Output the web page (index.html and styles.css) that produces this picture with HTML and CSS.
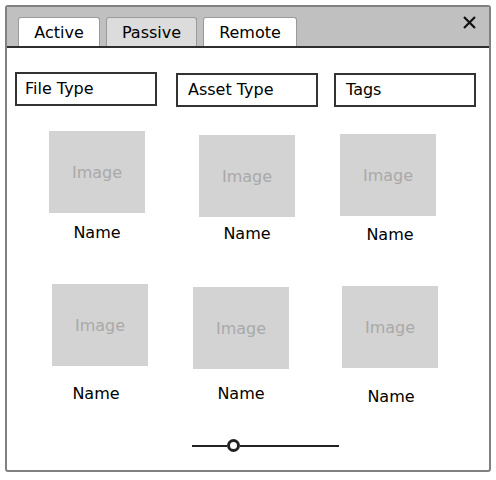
FILE: index.html
```html
<!DOCTYPE html>
<html lang="en">
<head>
<meta charset="utf-8">
<title>Asset Browser</title>
<link rel="stylesheet" href="styles.css">
</head>
<body>
<div class="window">
  <div class="header">
    <div class="tabs">
      <div class="tab tab-active">Active</div>
      <div class="tab tab-passive">Passive</div>
      <div class="tab tab-remote">Remote</div>
    </div>
    <svg class="close" viewBox="0 0 13 13" aria-label="Close">
      <path d="M1 1 L12 12 M12 1 L1 12" stroke="#111" stroke-width="2.2" fill="none"/>
    </svg>
  </div>
  <div class="filters">
    <div class="filter f-file">File Type</div>
    <div class="filter f-asset">Asset Type</div>
    <div class="filter f-tags">Tags</div>
  </div>
  <div class="gallery">
    <div class="card c1"><div class="thumb">Image</div><div class="name">Name</div></div>
    <div class="card c2"><div class="thumb">Image</div><div class="name">Name</div></div>
    <div class="card c3"><div class="thumb">Image</div><div class="name">Name</div></div>
    <div class="card c4"><div class="thumb">Image</div><div class="name">Name</div></div>
    <div class="card c5"><div class="thumb">Image</div><div class="name">Name</div></div>
    <div class="card c6"><div class="thumb">Image</div><div class="name">Name</div></div>
  </div>
  <div class="slider">
    <span class="track track-left"></span>
    <span class="knob"></span>
    <span class="track track-right"></span>
  </div>
</div>
</body>
</html>
```
FILE: styles.css
```css
body {
  margin: 0;
  background: #fff;
  font-family: "DejaVu Sans", sans-serif;
  font-size: 16px;
  color: #000;
}

.window {
  box-sizing: border-box;
  margin: 5px 0 0 5px;
  width: 486px;
  height: 467px;
  border: 2px solid #808080;
  border-radius: 3px;
  overflow: hidden;
}

.header {
  display: flex;
  align-items: flex-start;
  height: 39px;
  background: #c0c0c0;
  border-bottom: 2px solid #2e2e2e;
  padding-left: 11px;
}

.tabs {
  display: flex;
  gap: 6px;
  margin-top: 10px;
}

.tab {
  box-sizing: border-box;
  height: 29px;
  line-height: 28px;
  padding-top: 1px;
  border: 1px solid #9a9a9a;
  border-bottom: none;
  border-radius: 3px 3px 0 0;
  background: #fff;
  text-align: center;
}

.tab-active { width: 82px; }
.tab-passive { width: 91px; background: #dcdcdc; }
.tab-remote { width: 94px; }

.close {
  margin-left: auto;
  margin-top: 9px;
  margin-right: 13px;
  width: 13px;
  height: 13px;
}

.filters {
  display: flex;
  align-items: flex-start;
  margin-top: 24px;
}

.filter {
  box-sizing: border-box;
  width: 142px;
  height: 34px;
  border: 2px solid #333;
  line-height: 30px;
  padding-left: 10px;
}

.f-file { margin-left: 8px; padding-left: 8px; }
.f-asset { margin-left: 19px; margin-top: 1px; }
.f-tags { margin-left: 16px; margin-top: 1px; }

.gallery {
  display: grid;
  grid-template-columns: repeat(3, 96px);
  column-gap: 50px;
  row-gap: 40px;
  align-items: start;
  margin-top: 24px;
  padding-left: 43px;
}

.card {
  width: 96px;
}

.thumb {
  display: flex;
  align-items: center;
  justify-content: center;
  width: 96px;
  height: 82px;
  background: #d3d3d3;
  color: #a9a9a9;
  line-height: 19px;
}

.name {
  line-height: 19px;
  text-align: center;
}

.c1 { margin-left: -1px; }
.c1 .name { margin-top: 10px; }
.c2 { margin-left: 3px; margin-top: 4px; }
.c2 .name { margin-top: 7px; }
.c3 { margin-left: -2px; margin-top: 3px; }
.c3 .name { margin-top: 9px; margin-left: 4px; }
.c4 { margin-left: 2px; }
.c4 .name { margin-top: 18px; margin-left: -8px; }
.c5 { margin-left: -3px; margin-top: 3px; }
.c5 .name { margin-top: 15px; }
.c6 { margin-top: 2px; }
.c6 .name { margin-top: 19px; margin-left: 2px; }

.slider {
  display: flex;
  align-items: center;
  height: 13px;
  margin-top: 33px;
  margin-left: 185px;
}

.track {
  height: 2px;
  background: #222;
}

.track-left { width: 35px; }
.track-right { width: 99px; }

.knob {
  box-sizing: border-box;
  width: 13px;
  height: 13px;
  border: 3px solid #222;
  border-radius: 50%;
  background: #fff;
}
```
